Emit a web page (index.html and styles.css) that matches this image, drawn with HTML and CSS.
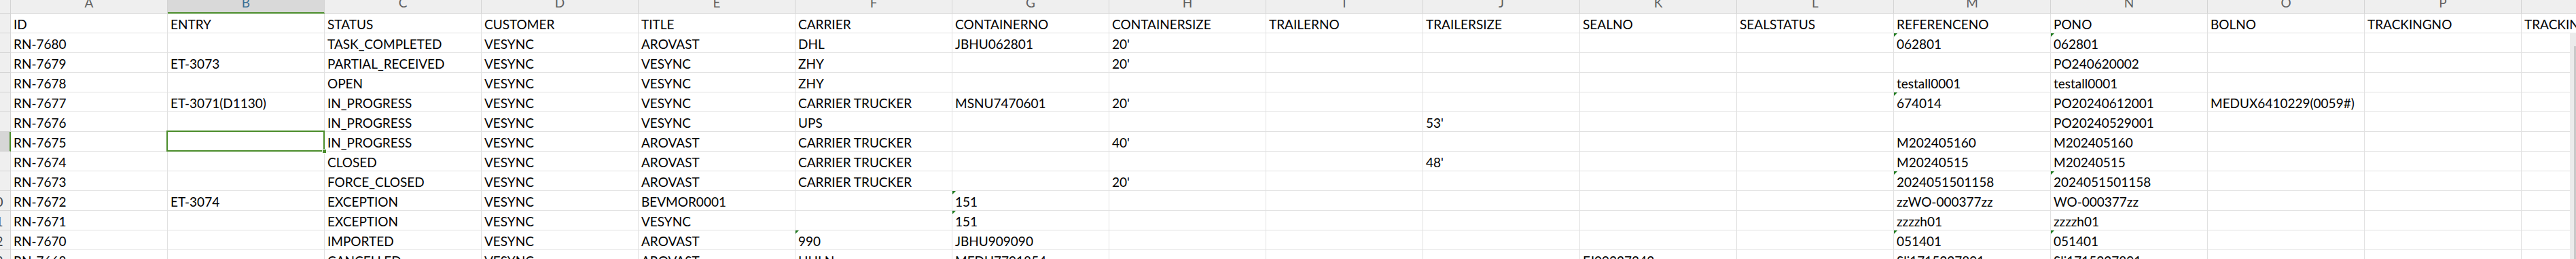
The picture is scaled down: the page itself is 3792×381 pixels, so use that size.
FILE: index.html
```html
<!DOCTYPE html>
<html>
<head>
<meta charset="utf-8">
<link rel="stylesheet" href="styles.css">
</head>
<body>
<div class="sheet">
  <div class="colheads">
    <div class="corner"></div>
    <div class="ch">A</div><div class="ch sel">B</div><div class="ch">C</div><div class="ch">D</div>
    <div class="ch">E</div><div class="ch">F</div><div class="ch">G</div><div class="ch">H</div>
    <div class="ch">I</div><div class="ch">J</div><div class="ch">K</div><div class="ch">L</div>
    <div class="ch">M</div><div class="ch">N</div><div class="ch">O</div><div class="ch">P</div><div class="ch">Q</div>
  </div>

  <div class="row">
    <div class="rh"><span>1</span></div>
    <div class="c">ID</div><div class="c">ENTRY</div><div class="c">STATUS</div><div class="c">CUSTOMER</div>
    <div class="c">TITLE</div><div class="c">CARRIER</div><div class="c">CONTAINERNO</div><div class="c">CONTAINERSIZE</div>
    <div class="c">TRAILERNO</div><div class="c">TRAILERSIZE</div><div class="c">SEALNO</div><div class="c">SEALSTATUS</div>
    <div class="c">REFERENCENO</div><div class="c">PONO</div><div class="c">BOLNO</div><div class="c">TRACKINGNO</div><div class="c">TRACKINGURL</div>
  </div>

  <div class="row">
    <div class="rh"><span>2</span></div>
    <div class="c">RN-7680</div><div class="c"></div><div class="c">TASK_COMPLETED</div><div class="c">VESYNC</div>
    <div class="c">AROVAST</div><div class="c">DHL</div><div class="c">JBHU062801</div><div class="c">20'</div>
    <div class="c"></div><div class="c"></div><div class="c"></div><div class="c"></div>
    <div class="c warn">062801</div><div class="c warn">062801</div><div class="c"></div><div class="c"></div><div class="c"></div>
  </div>

  <div class="row">
    <div class="rh"><span>3</span></div>
    <div class="c">RN-7679</div><div class="c">ET-3073</div><div class="c">PARTIAL_RECEIVED</div><div class="c">VESYNC</div>
    <div class="c">VESYNC</div><div class="c">ZHY</div><div class="c"></div><div class="c">20'</div>
    <div class="c"></div><div class="c"></div><div class="c"></div><div class="c"></div>
    <div class="c"></div><div class="c">PO240620002</div><div class="c"></div><div class="c"></div><div class="c"></div>
  </div>

  <div class="row">
    <div class="rh"><span>4</span></div>
    <div class="c">RN-7678</div><div class="c"></div><div class="c">OPEN</div><div class="c">VESYNC</div>
    <div class="c">VESYNC</div><div class="c">ZHY</div><div class="c"></div><div class="c"></div>
    <div class="c"></div><div class="c"></div><div class="c"></div><div class="c"></div>
    <div class="c">testall0001</div><div class="c">testall0001</div><div class="c"></div><div class="c"></div><div class="c"></div>
  </div>

  <div class="row">
    <div class="rh"><span>5</span></div>
    <div class="c">RN-7677</div><div class="c">ET-3071(D1130)</div><div class="c">IN_PROGRESS</div><div class="c">VESYNC</div>
    <div class="c">VESYNC</div><div class="c">CARRIER TRUCKER</div><div class="c">MSNU7470601</div><div class="c">20'</div>
    <div class="c"></div><div class="c"></div><div class="c"></div><div class="c"></div>
    <div class="c warn">674014</div><div class="c">PO20240612001</div><div class="c">MEDUX6410229(0059#)</div><div class="c"></div><div class="c"></div>
  </div>

  <div class="row">
    <div class="rh"><span>6</span></div>
    <div class="c">RN-7676</div><div class="c"></div><div class="c">IN_PROGRESS</div><div class="c">VESYNC</div>
    <div class="c">VESYNC</div><div class="c">UPS</div><div class="c"></div><div class="c"></div>
    <div class="c"></div><div class="c">53'</div><div class="c"></div><div class="c"></div>
    <div class="c"></div><div class="c">PO20240529001</div><div class="c"></div><div class="c"></div><div class="c"></div>
  </div>

  <div class="row">
    <div class="rh rh-sel"><span>7</span></div>
    <div class="c">RN-7675</div><div class="c active"><div class="selbox"></div><div class="handle"></div></div><div class="c">IN_PROGRESS</div><div class="c">VESYNC</div>
    <div class="c">AROVAST</div><div class="c">CARRIER TRUCKER</div><div class="c"></div><div class="c">40'</div>
    <div class="c"></div><div class="c"></div><div class="c"></div><div class="c"></div>
    <div class="c">M202405160</div><div class="c">M202405160</div><div class="c"></div><div class="c"></div><div class="c"></div>
  </div>

  <div class="row">
    <div class="rh"><span>8</span></div>
    <div class="c">RN-7674</div><div class="c"></div><div class="c">CLOSED</div><div class="c">VESYNC</div>
    <div class="c">AROVAST</div><div class="c">CARRIER TRUCKER</div><div class="c"></div><div class="c"></div>
    <div class="c"></div><div class="c">48'</div><div class="c"></div><div class="c"></div>
    <div class="c">M20240515</div><div class="c">M20240515</div><div class="c"></div><div class="c"></div><div class="c"></div>
  </div>

  <div class="row">
    <div class="rh"><span>9</span></div>
    <div class="c">RN-7673</div><div class="c"></div><div class="c">FORCE_CLOSED</div><div class="c">VESYNC</div>
    <div class="c">AROVAST</div><div class="c">CARRIER TRUCKER</div><div class="c"></div><div class="c">20'</div>
    <div class="c"></div><div class="c"></div><div class="c"></div><div class="c"></div>
    <div class="c warn">2024051501158</div><div class="c warn">2024051501158</div><div class="c"></div><div class="c"></div><div class="c"></div>
  </div>

  <div class="row">
    <div class="rh"><span>10</span></div>
    <div class="c">RN-7672</div><div class="c">ET-3074</div><div class="c">EXCEPTION</div><div class="c">VESYNC</div>
    <div class="c">BEVMOR0001</div><div class="c"></div><div class="c warn">151</div><div class="c"></div>
    <div class="c"></div><div class="c"></div><div class="c"></div><div class="c"></div>
    <div class="c">zzWO-000377zz</div><div class="c">WO-000377zz</div><div class="c"></div><div class="c"></div><div class="c"></div>
  </div>

  <div class="row">
    <div class="rh"><span>11</span></div>
    <div class="c">RN-7671</div><div class="c"></div><div class="c">EXCEPTION</div><div class="c">VESYNC</div>
    <div class="c">VESYNC</div><div class="c"></div><div class="c warn">151</div><div class="c"></div>
    <div class="c"></div><div class="c"></div><div class="c"></div><div class="c"></div>
    <div class="c">zzzzh01</div><div class="c">zzzzh01</div><div class="c"></div><div class="c"></div><div class="c"></div>
  </div>

  <div class="row">
    <div class="rh"><span>12</span></div>
    <div class="c">RN-7670</div><div class="c"></div><div class="c">IMPORTED</div><div class="c">VESYNC</div>
    <div class="c">AROVAST</div><div class="c warn">990</div><div class="c">JBHU909090</div><div class="c"></div>
    <div class="c"></div><div class="c"></div><div class="c"></div><div class="c"></div>
    <div class="c warn">051401</div><div class="c warn">051401</div><div class="c"></div><div class="c"></div><div class="c"></div>
  </div>

  <div class="row">
    <div class="rh"><span>13</span></div>
    <div class="c">RN-7668</div><div class="c"></div><div class="c">CANCELLED</div><div class="c">VESYNC</div>
    <div class="c">AROVAST</div><div class="c">HHLN</div><div class="c">MEDU7791854</div><div class="c"></div>
    <div class="c"></div><div class="c"></div><div class="c">FJ09327342</div><div class="c"></div>
    <div class="c">Sli1715227891</div><div class="c">Sli1715227891</div><div class="c"></div><div class="c"></div><div class="c"></div>
  </div>
</div>
<div class="vscroll"><div class="thumb"></div></div>
</body>
</html>
```

FILE: styles.css
```css
html, body {
  margin: 0;
  padding: 0;
}
body {
  width: 3792px;
  height: 381px;
  overflow: hidden;
  background: #ffffff;
  position: relative;
  font-family: Lato, "DejaVu Sans Condensed", sans-serif;
  color: #000;
}
.sheet {
  display: flex;
  flex-direction: column;
  width: max-content;
}
.colheads {
  display: flex;
  height: 20px;
  background: #efefef;
}
.corner {
  flex: 0 0 16px;
  box-sizing: border-box;
  border-right: 1px solid #d4d4d4;
  border-bottom: 1px solid #d4d4d4;
}
.ch {
  flex: 0 0 231px;
  box-sizing: border-box;
  height: 20px;
  border-right: 1px solid #d4d4d4;
  border-bottom: 1px solid #d4d4d4;
  display: flex;
  align-items: flex-end;
  justify-content: center;
  overflow: hidden;
  font-size: 19px;
  line-height: 20px;
  padding-bottom: 5px;
  color: #5f5f5f;
}
.ch.sel {
  background: #d9d9d9;
  color: #3a6f94;
  border-bottom: 2px solid #4a8c2a;
  padding-bottom: 4px;
}
.row {
  display: flex;
  height: 29px;
}
.rh {
  flex: 0 0 16px;
  box-sizing: border-box;
  height: 29px;
  background: #efefef;
  border-right: 1px solid #d4d4d4;
  border-bottom: 1px solid #d4d4d4;
  overflow: hidden;
  display: flex;
  align-items: flex-end;
  padding-bottom: 2px;
  font-size: 19px;
  line-height: 21px;
  color: #444;
}
.rh span {
  flex: 0 0 45px;
  margin-left: -29px;
  text-align: center;
}
.rh-sel {
  background: #d6d6d6;
  border-right: 2px solid #4a8c2a;
}
.c {
  flex: 0 0 231px;
  box-sizing: border-box;
  height: 29px;
  border-right: 1px solid #e1e1e1;
  border-bottom: 1px solid #e1e1e1;
  display: flex;
  align-items: flex-end;
  padding: 0 4px 2px 4px;
  font-size: 19px;
  line-height: 21px;
  white-space: nowrap;
  overflow: hidden;
  position: relative;
}
.c.warn::before {
  content: "";
  position: absolute;
  left: 0;
  top: 0;
  width: 0;
  height: 0;
  border-top: 5px solid #1e7a1e;
  border-right: 5px solid transparent;
}
.c.active {
  overflow: visible;
  z-index: 2;
}
.selbox {
  position: absolute;
  left: -2px;
  top: -2px;
  width: 233px;
  height: 31px;
  box-sizing: border-box;
  border: 2px solid #4a8c2a;
}
.handle {
  position: absolute;
  left: 228px;
  top: 26px;
  width: 5px;
  height: 5px;
  background: #4a8c2a;
  box-shadow: 0 0 0 1px #ffffff;
}
.vscroll {
  position: absolute;
  right: 0;
  top: 48px;
  width: 9px;
  bottom: 0;
  background: #ebebeb;
}
.thumb {
  position: absolute;
  right: 0;
  top: 20px;
  bottom: 0;
  width: 3px;
  background: #c9c9c9;
}
```
